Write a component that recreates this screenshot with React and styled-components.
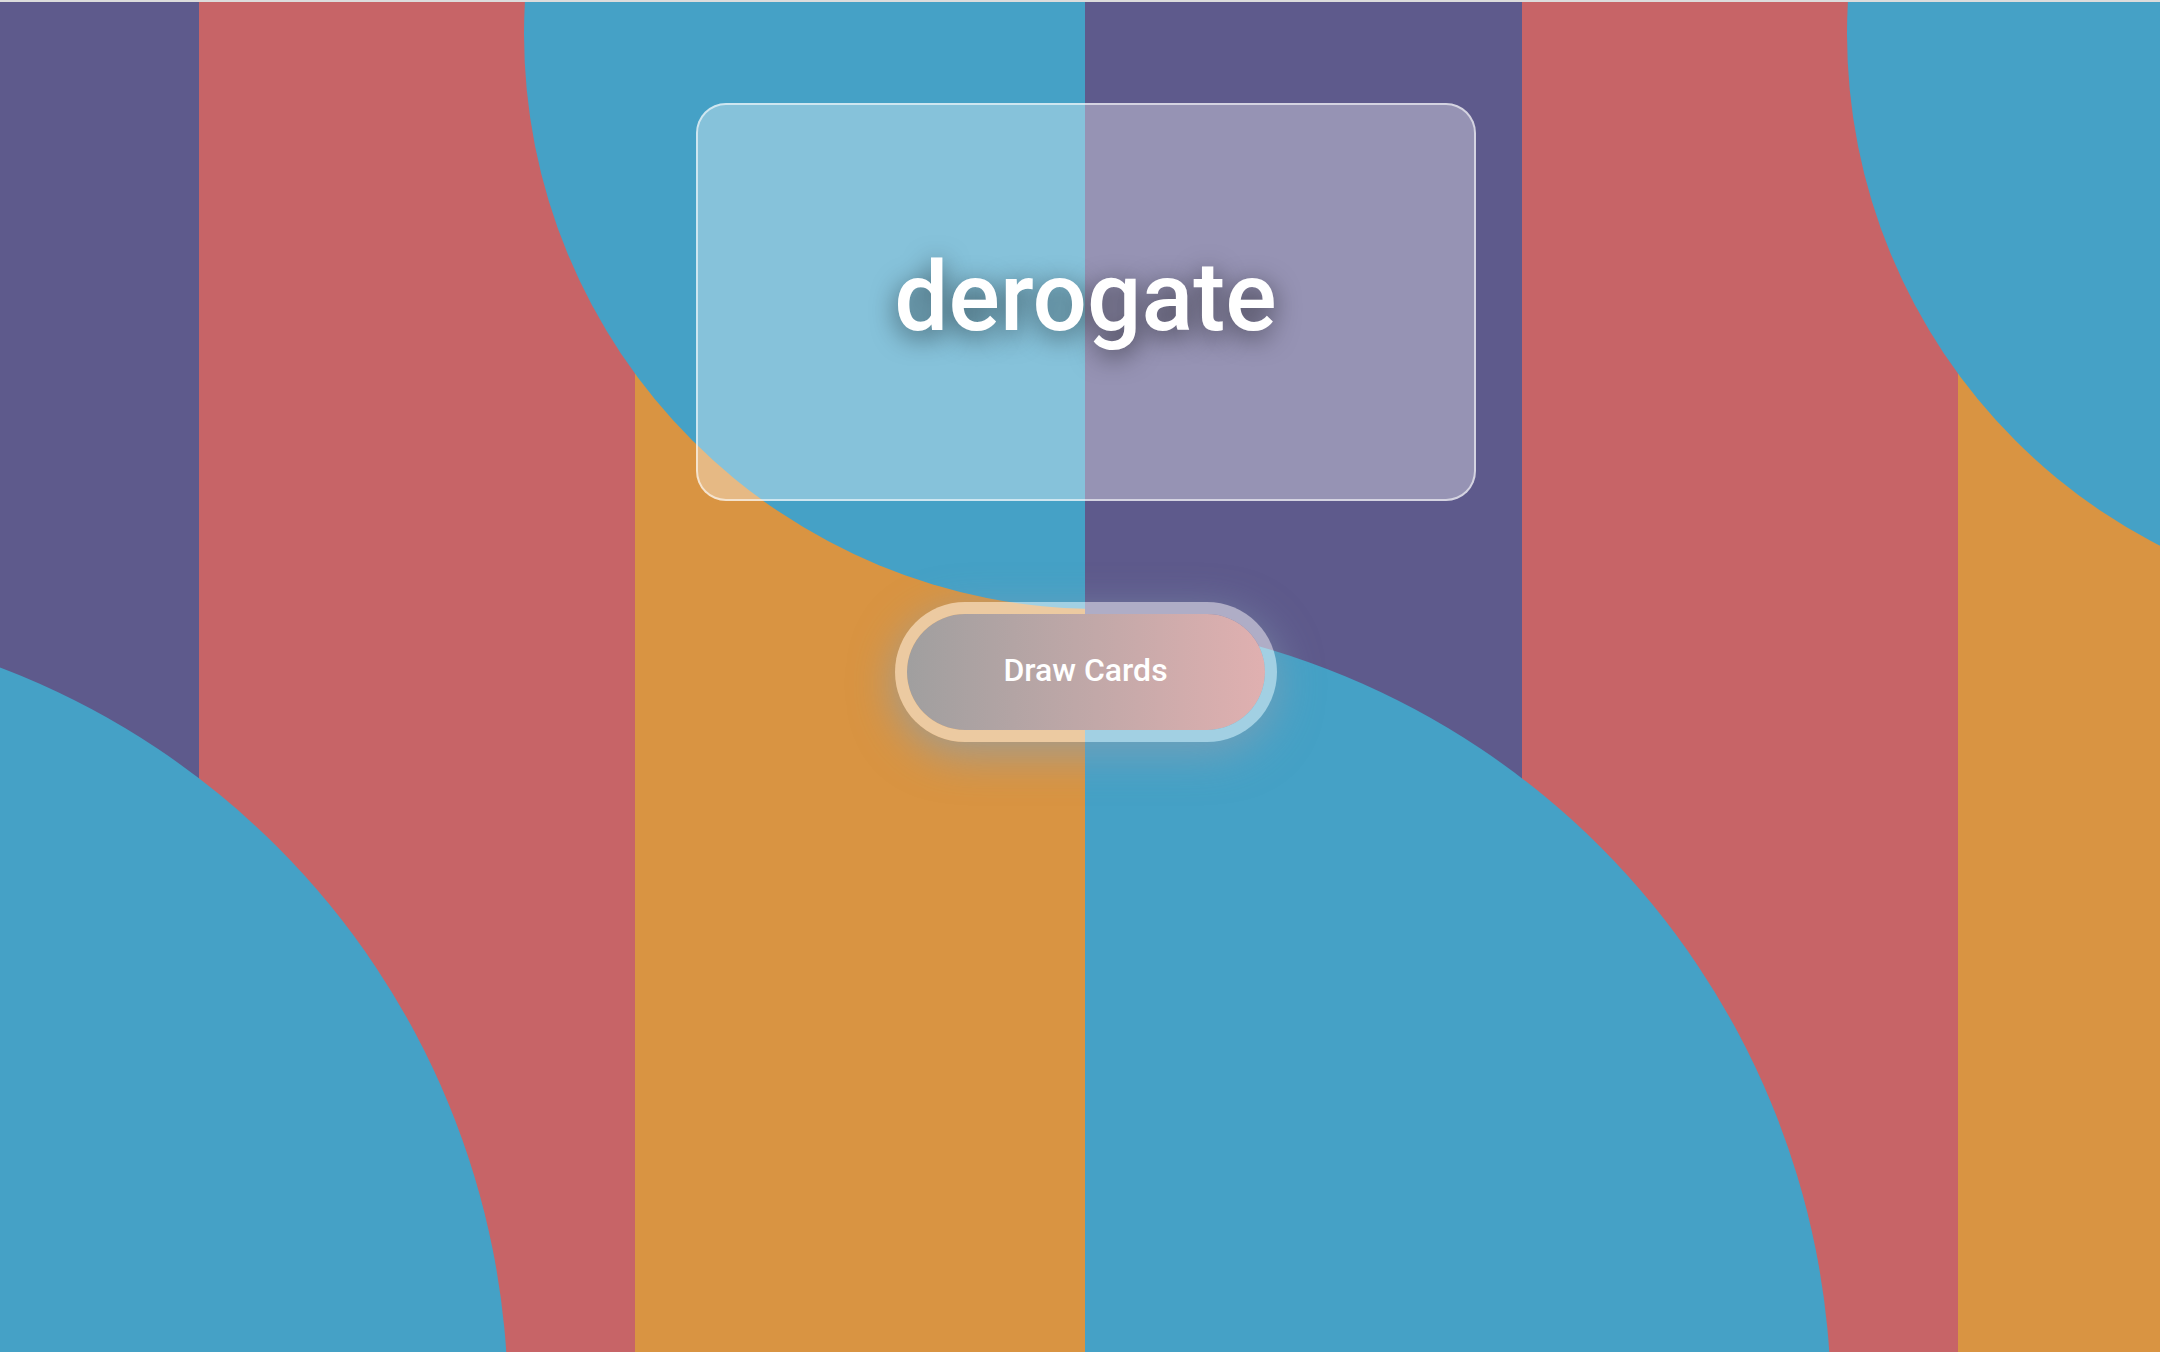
import React from "react";
import styled, { createGlobalStyle } from "styled-components";

const GlobalStyle = createGlobalStyle`
    html, body {
        margin: 0;
        padding: 0;
    }
    body {
        background: #dcdcdc;
        font-family: Roboto, "Liberation Sans", sans-serif;
    }
`;

const Frame = styled.div`
    position: relative;
    height: 1350px;
    border-top: 2px solid #dcdcdc;
    overflow: hidden;
`;

const Backdrop = styled.svg`
    position: absolute;
    inset: 0;
    display: block;
    width: 100%;
    height: 100%;
`;

const Stage = styled.div`
    position: relative;
    display: flex;
    flex-direction: column;
    align-items: center;
    gap: 101px;
    padding: 101px 0 0 11px;
`;

const Card = styled.section`
    box-sizing: border-box;
    display: flex;
    align-items: center;
    justify-content: center;
    width: 780px;
    height: 398px;
    padding-bottom: 10px;
    border: 2px solid rgba(255, 255, 255, 0.6);
    border-radius: 30px;
    background: rgba(255, 255, 255, 0.35);
`;

const Word = styled.h1`
    margin: 0;
    color: #fff;
    font-family: Roboto, "Liberation Sans", sans-serif;
    font-size: 96px;
    font-weight: 500;
    text-shadow: 0 6px 26px rgba(0, 0, 0, 0.6);
`;

const DrawButton = styled.button`
    box-sizing: border-box;
    width: 382px;
    height: 140px;
    padding: 0 0 4px;
    border: 12px solid rgba(255, 255, 255, 0.5);
    border-radius: 70px;
    background: linear-gradient(90deg, #a09f9f, #e0b0b0);
    background-clip: padding-box;
    box-shadow: 0 12px 44px rgba(135, 160, 180, 0.7);
    color: #fff;
    font-family: Roboto, "Liberation Sans", sans-serif;
    font-size: 32px;
    font-weight: 500;
    cursor: pointer;
`;

const PURPLE = "#5e5a8c";
const RED = "#c76467";
const ORANGE = "#d99442";
const BLUE = "#45a1c6";
const TILE = 1323;

// one tile = three stripes, a circle hanging from the top right, one rising from the bottom left
const tiles = [-238, -238 + TILE];

const Pattern = () => (
    <Backdrop viewBox="0 2 2160 1350" preserveAspectRatio="none">
        <defs>
            {tiles.map((x, i) => (
                <clipPath id={`tile-${i}`} key={i}>
                    <rect x={x} y="0" width={TILE} height="1400" />
                </clipPath>
            ))}
        </defs>
        {tiles.map((x, i) => (
            <g clipPath={`url(#tile-${i})`} key={i}>
                <rect x={x} y="0" width="437" height="1400" fill={PURPLE} />
                <rect x={x + 437} y="0" width="436" height="1400" fill={RED} />
                <rect x={x + 873} y="0" width="450" height="1400" fill={ORANGE} />
                <circle cx={x + 1337} cy="34" r="575" fill={BLUE} />
                <circle cx={x - 42} cy="1404" r="788" fill={BLUE} />
            </g>
        ))}
    </Backdrop>
);

const App = () => (
    <>
        <GlobalStyle />
        <Frame>
            <Pattern />
            <Stage>
                <Card>
                    <Word>derogate</Word>
                </Card>
                <DrawButton>Draw Cards</DrawButton>
            </Stage>
        </Frame>
    </>
);

export default App;
